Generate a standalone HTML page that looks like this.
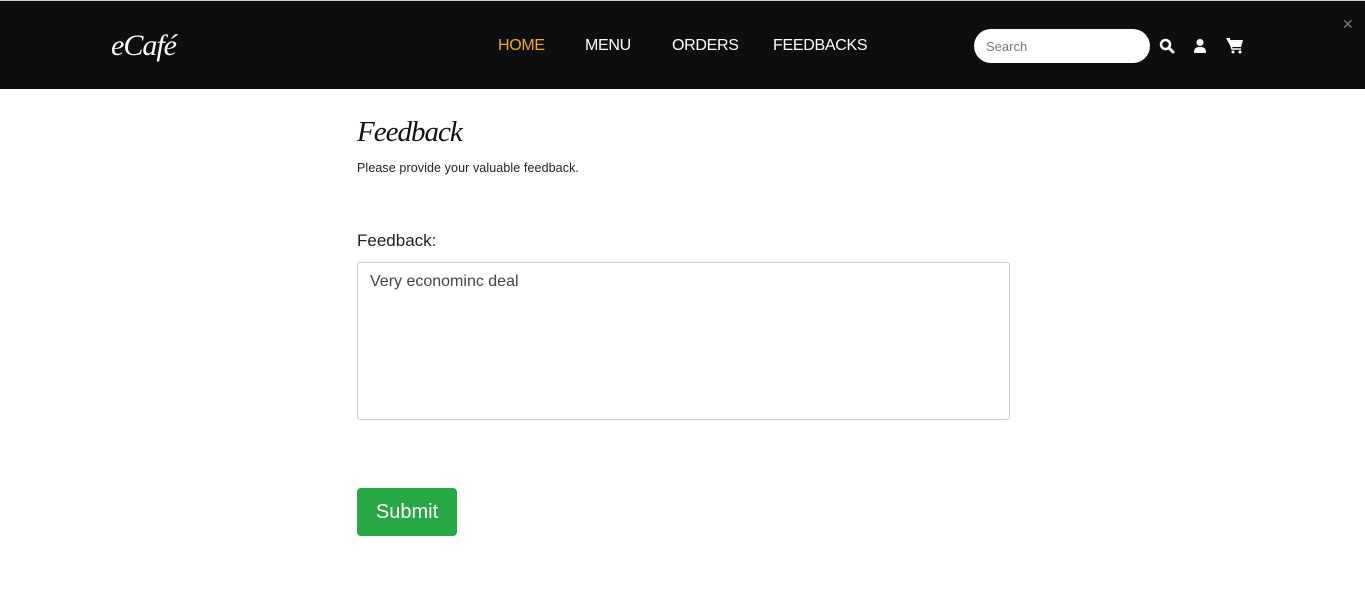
<!DOCTYPE html>
<html><head><style>
*{box-sizing:border-box;margin:0;padding:0}
body{width:1365px;height:596px;background:#fff;font-family:"Liberation Sans",sans-serif;overflow:hidden;position:relative}
.nav{position:absolute;top:0;left:0;width:1365px;height:89px;background:#0d0e10;border-top:1px solid #ccc}
.logo{position:absolute;left:111px;top:28px;color:#fff;font:italic 30px "Liberation Serif",serif;letter-spacing:-1px}
.links a{position:absolute;top:36px;color:#fff;font-size:16px;text-decoration:none;letter-spacing:-0.3px}
.search{position:absolute;left:974px;top:28px;width:176px;height:34px;background:#fff;border-radius:17px;color:#777;font-size:13px;padding:10px 12px}
.x{position:absolute;left:1342px;top:15px;color:#777;font-size:14px}
h1{position:absolute;left:357px;top:116px;font:italic 29px "Liberation Serif",serif;color:#111;letter-spacing:-1px}
.sub{position:absolute;left:357px;top:161px;font-size:12.5px;color:#222;letter-spacing:0.1px}
.lbl{position:absolute;left:357px;top:231px;font-size:17px;color:#222}
.ta{position:absolute;left:357px;top:262px;width:653px;height:158px;border:1px solid #ccc;border-radius:3px;padding:10px 12px;font-size:16px;color:#444}
.btn{position:absolute;left:357px;top:488px;width:100px;height:48px;background:#28a745;border-radius:4px;color:#fff;font-size:20px;text-align:center;line-height:48px}
</style></head><body>
<div class="nav">
<div class="logo">eCafé</div>
<div class="links"><a style="left:498px;color:#f0a830">HOME</a><a style="left:585px">MENU</a><a style="left:672px">ORDERS</a><a style="left:773px">FEEDBACKS</a></div>
<div class="search">Search</div>
<svg style="position:absolute;left:1159px;top:37px" width="16" height="16" viewBox="0 0 16 16"><circle cx="6.5" cy="6.5" r="4.5" fill="none" stroke="#fff" stroke-width="2.5"/><path d="M10 10l4 4" stroke="#fff" stroke-width="3" stroke-linecap="round"/></svg>
<svg style="position:absolute;left:1193px;top:37px" width="14" height="16" viewBox="0 0 14 16"><circle cx="7" cy="4.5" r="3.5" fill="#fff"/><path d="M1 15c0-5 2-6 6-6s6 1 6 6z" fill="#fff"/></svg>
<svg style="position:absolute;left:1226px;top:36px" width="18" height="17" viewBox="0 0 18 17"><path d="M0 1h3l1 2h13l-2 7H5z" fill="#fff"/><path d="M3 1l3 11h9" stroke="#fff" stroke-width="1.5" fill="none"/><circle cx="7" cy="15" r="1.5" fill="#fff"/><circle cx="14" cy="15" r="1.5" fill="#fff"/></svg>
<div class="x">✕</div>
</div>
<h1>Feedback</h1>
<div class="sub">Please provide your valuable feedback.</div>
<div class="lbl">Feedback:</div>
<div class="ta">Very econominc deal</div>
<div class="btn">Submit</div>
</body></html>
